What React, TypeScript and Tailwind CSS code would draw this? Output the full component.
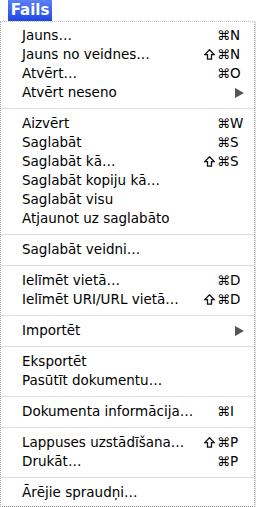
type Item =
  | { kind: "sep" }
  | { kind: "item"; label: string; shift?: boolean; key?: string; submenu?: boolean };

const items: Item[] = [
  { kind: "item", label: "Jauns…", key: "N" },
  { kind: "item", label: "Jauns no veidnes…", shift: true, key: "N" },
  { kind: "item", label: "Atvērt…", key: "O" },
  { kind: "item", label: "Atvērt neseno", submenu: true },
  { kind: "sep" },
  { kind: "item", label: "Aizvērt", key: "W" },
  { kind: "item", label: "Saglabāt", key: "S" },
  { kind: "item", label: "Saglabāt kā…", shift: true, key: "S" },
  { kind: "item", label: "Saglabāt kopiju kā…" },
  { kind: "item", label: "Saglabāt visu" },
  { kind: "item", label: "Atjaunot uz saglabāto" },
  { kind: "sep" },
  { kind: "item", label: "Saglabāt veidni…" },
  { kind: "sep" },
  { kind: "item", label: "Ielīmēt vietā…", key: "D" },
  { kind: "item", label: "Ielīmēt URI/URL vietā…", shift: true, key: "D" },
  { kind: "sep" },
  { kind: "item", label: "Importēt", submenu: true },
  { kind: "sep" },
  { kind: "item", label: "Eksportēt" },
  { kind: "item", label: "Pasūtīt dokumentu…" },
  { kind: "sep" },
  { kind: "item", label: "Dokumenta informācija…", key: "I" },
  { kind: "sep" },
  { kind: "item", label: "Lappuses uzstādīšana…", shift: true, key: "P" },
  { kind: "item", label: "Drukāt…", key: "P" },
  { kind: "sep" },
  { kind: "item", label: "Ārējie spraudņi…" },
];

const SubArrow = () => (
  <svg width="9" height="10" viewBox="0 0 9 10">
    <polygon points="0,0 9,5 0,10" fill="#555555" />
  </svg>
);

const ShiftArrow = () => (
  <svg width="11" height="11" viewBox="0 0 11 11">
    <polygon
      points="5.5,0.8 10.2,5.6 7.5,5.6 7.5,10.2 3.5,10.2 3.5,5.6 0.8,5.6"
      fill="none"
      stroke="#111111"
      strokeWidth="1.3"
      strokeLinejoin="miter"
    />
  </svg>
);

export default function App() {
  return (
    <div className="w-[256px] h-[507px] bg-white text-black" style={{ fontFamily: '"DejaVu Sans", sans-serif' }}>

      {/* menu bar title */}
      <div className="h-[21px] flex">
        <div className="ml-2 w-[44px] h-[21px] bg-gradient-to-b from-[#5a7ff6] to-[#2144e6] text-white font-bold text-[15px] flex items-center justify-center">
          Fails
        </div>
      </div>

      {/* dropdown */}
      <div className="w-[255px] border-t border-dotted border-t-[#c8c8c8] border-x border-x-[#a8a8a8] border-b border-b-[#8a8a8a] shadow-[0_1px_2px_rgba(0,0,0,0.35)] py-1">
        {items.map((it, i) =>
          it.kind === "sep" ? (
            <div key={i} className="h-[12px] flex items-center">
              <div className="w-full h-px bg-[#dddddd]" />
            </div>
          ) : (
            <div key={i} className="h-[19px] flex items-center pl-[21px] text-[13.5px] leading-none">
              <span className="flex-1 whitespace-nowrap">{it.label}</span>
              <div className="w-[50px] flex items-center">
                <span className="w-[13px] flex">{it.shift && <ShiftArrow />}</span>
                <span className="w-[13px] text-[13px]">{it.key ? "⌘" : ""}</span>
                <span className="flex-1">
                  {it.key}
                  {it.submenu && (
                    <span className="flex pl-[5px]">
                      <SubArrow />
                    </span>
                  )}
                </span>
              </div>
            </div>
          )
        )}
      </div>
    </div>
  );
}
